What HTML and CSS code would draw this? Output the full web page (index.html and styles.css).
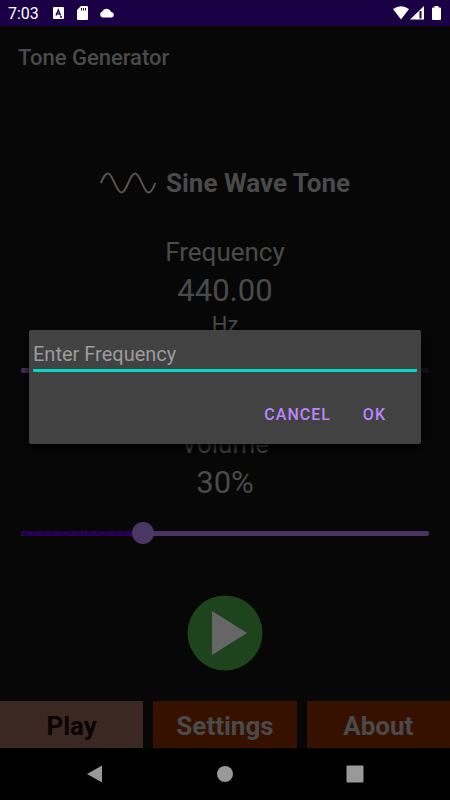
FILE: index.html
```html
<!DOCTYPE html>
<html lang="en">
	<head>
		<meta charset="utf-8">
		<meta name="viewport" content="width=device-width, initial-scale=1">
		<title>Tone Generator</title>
		<link rel="stylesheet" href="styles.css">
	</head>
	<body>

<div class="status">
	<span class="time">7:03</span>
	<svg class="keyboard" width="11" height="12" viewBox="0 0 11 12">
		<rect width="11" height="12" rx="1" fill="#fff"/>
		<path d="M3 8.5L5.3 3L7.6 8.5M3.8 6.8H6.8M7 10H9" fill="none" stroke="#1a0044" stroke-width="1.3"/>
	</svg>
	<svg class="card" width="11" height="14" viewBox="0 0 11 14">
		<path d="M4 0H10Q11 0 11 1V13Q11 14 10 14H1Q0 14 0 13V4Z" fill="#fff"/>
		<path d="M4.5 2V4.5M6.5 2V4.5M8.5 2V4.5" stroke="#1a0044"/>
	</svg>
	<svg class="cloud" width="16" height="10" viewBox="0 0 16 10">
		<path d="M3.5 9.5A3.2 3.2 0 0 1 3.2 3.4A5 5 0 0 1 12.2 4A2.8 2.8 0 0 1 12.8 9.5Z" fill="#fff"/>
	</svg>
	<svg class="signals" width="49" height="16" viewBox="0 0 49 16">
		<path d="M0 4Q8 -1.5 16 4L8 14.5Z" fill="#fff"/>
		<path d="M17 14.5L31 1V14.5Z" fill="#fff"/>
		<path d="M27.5 6V13.5" stroke="#1a0044" stroke-width="2"/>
		<path d="M41.5 1H45.5V2.5H47Q48 2.5 48 3.5V14Q48 15 47 15H40Q39 15 39 14V3.5Q39 2.5 40 2.5H41.5Z" fill="#fff"/>
	</svg>
</div>

<div class="app">
	<header><h1>Tone Generator</h1></header>

	<main>
		<h2>
			<svg width="56" height="22" viewBox="0 0 56 22">
				<path d="M.8 11C4 4 5.5 1.5 8 1.5C13 1.5 16 20.5 21.5 20.5C27 20.5 29.5 1.5 35 1.5C40.5 1.5 43.5 20.5 48.5 20.5C51 20.5 53 17 55.2 11"/>
			</svg>
			Sine Wave Tone
		</h2>

		<section class="frequency">
			<label for="frequency">Frequency</label>
			<output class="value" for="frequency">440.00</output>
			<span class="unit">Hz</span>
			<div class="slider">
				<input type="range" id="frequency" min="0" max="1000" value="440">
			</div>
		</section>

		<section class="volume">
			<label for="volume">Volume</label>
			<output class="value" for="volume">30%</output>
			<div class="slider">
				<div class="steps" style="width: 30%"></div>
				<input type="range" id="volume" min="0" max="100" value="30">
			</div>
		</section>

		<button class="play" type="button" aria-label="Play tone">
			<svg width="76" height="76" viewBox="0 0 76 76">
				<circle cx="38" cy="38" r="37.5" fill="#1e441e"/>
				<path d="M25 16L60 38L25 60Z" fill="#666"/>
			</svg>
		</button>
	</main>

	<nav class="tabs">
		<button type="button" class="current">Play</button>
		<button type="button">Settings</button>
		<button type="button">About</button>
	</nav>

	<div class="overlay">
		<form class="dialog" role="dialog" aria-label="Enter Frequency">
			<input type="text" placeholder="Enter Frequency" aria-label="Enter Frequency">
			<div class="actions">
				<button type="button">CANCEL</button>
				<button type="button">OK</button>
			</div>
		</form>
	</div>
</div>

<nav class="system">
	<button type="button" aria-label="Back">
		<svg width="18" height="18" viewBox="0 0 18 18"><path d="M16 .5V17.5L1 9Z"/></svg>
	</button>
	<button type="button" aria-label="Home">
		<svg width="18" height="18" viewBox="0 0 18 18"><circle cx="9" cy="9" r="8"/></svg>
	</button>
	<button type="button" aria-label="Recent apps">
		<svg width="18" height="18" viewBox="0 0 18 18"><rect x=".5" y=".5" width="17" height="17" rx="1"/></svg>
	</button>
</nav>

	</body>
</html>
```
FILE: styles.css
```css
* { box-sizing: border-box; }
body {
	background: #000;
	color: #4a4a4a;
	display: flex;
	flex-direction: column;
	font-family: Roboto, sans-serif;
	margin: 0;
	min-height: 100vh;
	}
svg { display: block; }
button {
	background: none;
	border: 0;
	color: inherit;
	font-family: inherit;
	padding: 0;
	}

/* status bar */
.status {
	align-items: center;
	background: #1a0044;
	color: #fff;
	display: flex;
	height: 26px;
	padding: 0 8px;
	}
.time { font-size: 16px; }
.keyboard { margin-left: 14px; }
.card { margin-left: 13px; }
.cloud { margin-left: 11px; }
.signals { margin-left: auto; }

/* screen */
.app {
	background: #070707;
	display: flex;
	flex: 1;
	flex-direction: column;
	position: relative;
	}
header { padding: 16px 18px; }
h1 {
	font-size: 22px;
	font-weight: 500;
	line-height: 32px;
	margin: 0;
	}
main {
	align-items: center;
	display: flex;
	flex: 1;
	flex-direction: column;
	padding: 77px 21px 24px;
	}
h2 {
	align-items: center;
	display: flex;
	font-size: 26px;
	font-weight: 700;
	gap: 10px;
	line-height: 32px;
	margin: 0;
	}
h2 svg {
	fill: none;
	stroke: #585250;
	stroke-width: 2;
	}
section {
	align-items: center;
	align-self: stretch;
	display: flex;
	flex-direction: column;
	}
label {
	font-size: 26px;
	line-height: 32px;
	}
.value {
	font-size: 31px;
	line-height: 40px;
	margin-top: 3px;
	}
.unit {
	font-size: 22px;
	line-height: 28px;
	}
.frequency { margin-top: 37px; }
.volume { margin-top: 55px; }

.slider {
	background: #4b3263;
	border-radius: 2px;
	height: 5px;
	margin-top: 28px;
	position: relative;
	width: 100%;
	}
.frequency .slider {
	background: linear-gradient(to right, #4b3263 44%, #17111e 44%);
	margin-top: 29px;
	}
.steps {
	background: radial-gradient(circle, #10002a 1px, #280058 2px) 0 0 / 9px 5px;
	border-radius: 2px;
	height: 5px;
	}
.slider input {
	-webkit-appearance: none;
	appearance: none;
	background: none;
	height: 22px;
	left: -11px;
	margin: 0;
	position: absolute;
	top: -9px;
	width: calc(100% + 22px);
	}
.slider input::-webkit-slider-thumb {
	-webkit-appearance: none;
	background: #4b3763;
	border-radius: 50%;
	height: 22px;
	width: 22px;
	}
.play { margin-top: 59px; }

.tabs {
	display: grid;
	gap: 10px;
	grid-template-columns: repeat(3, 1fr);
	}
.tabs button {
	background: #361100;
	font-size: 26px;
	font-weight: 700;
	height: 47px;
	padding-top: 2px;
	}
.tabs .current {
	background: #3b2822;
	color: #0a0404;
	}

/* dialog */
.overlay {
	align-items: center;
	display: flex;
	inset: 0;
	padding: 0 29px;
	position: absolute;
	}
.dialog {
	background: #424242;
	border-radius: 2px;
	box-shadow: 0 4px 12px #000;
	padding: 8px 4px 12px;
	width: 100%;
	}
.dialog input {
	background: none;
	border: 0;
	border-bottom: 3px solid #03dac5;
	border-radius: 1px;
	color: #fff;
	display: block;
	font-family: inherit;
	font-size: 20px;
	height: 34px;
	outline: 0;
	padding: 1px 0 0;
	width: 100%;
	}
.dialog input::placeholder { color: #9c9c9c; }
.actions {
	display: flex;
	gap: 32px;
	justify-content: flex-end;
	padding: 24px 31px 0 0;
	}
.actions button {
	color: #bb86fc;
	font-size: 16px;
	font-weight: 500;
	height: 36px;
	letter-spacing: 1px;
	}

/* navigation keys */
.system {
	align-items: center;
	display: flex;
	height: 52px;
	justify-content: space-between;
	padding: 0 86px;
	}
.system svg { fill: #999; }
```
